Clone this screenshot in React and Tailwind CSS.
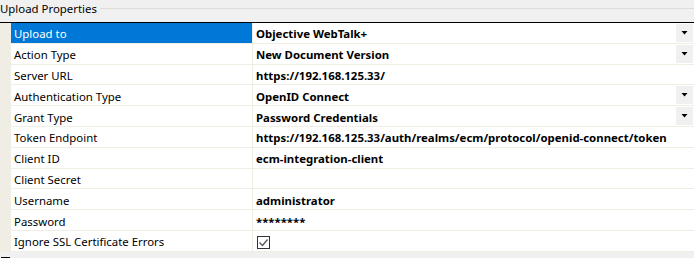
import React from "react";

const rows = [
  { label: "Upload to", value: "Objective WebTalk+", dd: true, sel: true },
  { label: "Action Type", value: "New Document Version", dd: true },
  { label: "Server URL", value: "https://192.168.125.33/" },
  { label: "Authentication Type", value: "OpenID Connect", dd: true },
  { label: "Grant Type", value: "Password Credentials", dd: true },
  { label: "Token Endpoint", value: "https://192.168.125.33/auth/realms/ecm/protocol/openid-connect/token" },
  { label: "Client ID", value: "ecm-integration-client" },
  { label: "Client Secret", value: "" },
  { label: "Username", value: "administrator" },
  { label: "Password", value: "********" },
  { label: "Ignore SSL Certificate Errors", check: true },
];

function Arrow() {
  return (
    <div className="w-[17px] h-[18px] bg-[#f0f0f0] flex items-center justify-center mr-[1px]">
      <svg width="7" height="4" viewBox="0 0 7 4">
        <polygon points="0.5,0 6.5,0 3.5,3.5" fill="#000" />
      </svg>
    </div>
  );
}

export default function App() {
  return (
    <div
      className="w-[694px] h-[258px] bg-[#f0f0f0] overflow-hidden text-[11.4px] text-black"
      style={{ fontFamily: '"Noto Sans", "Open Sans", sans-serif' }}
    >
      <div className="h-[22px] flex items-start">
        <span className="leading-[16px] pt-[1px]">Upload Properties</span>
        <div className="flex-1 border-t border-[#dcdcdc] mt-[8px] ml-[3px]" />
      </div>
      <div className="border-t border-black" />
      <div className="flex bg-[#f0ede4]">
        <div className="w-[11px]" />
        <div className="flex-1 flex flex-col">
          {rows.map((r) => (
            <div key={r.label} className="flex h-[20.8px] border-b border-[#f0ede4] bg-white">
              <div
                className={
                  "w-[242px] pl-[3px] pt-[2px] flex items-center border-r border-[#f0ede4] " +
                  (r.sel ? "bg-[#0078d7] text-white" : "")
                }
              >
                {r.label}
              </div>
              <div className="flex-1 flex items-center pl-[3px] font-bold">
                {r.check ? (
                  <div className="w-[13px] h-[13px] border border-[#333] flex items-center justify-center ml-[1px] mt-[3px]">
                    <svg width="11" height="9" viewBox="0 0 11 9">
                      <polyline points="1.5,4.5 4.5,7.5 9.5,1.5" fill="none" stroke="#555" strokeWidth="1.3" />
                    </svg>
                  </div>
                ) : (
                  <span className="flex-1 pt-[2px]">{r.value}</span>
                )}
                {r.dd && <Arrow />}
              </div>
            </div>
          ))}
        </div>
      </div>
      <div className="flex items-start mt-[5px]">
        <div className="w-[9px] h-[9px] border border-black bg-white ml-[1px]" />
        <span className="ml-[4px] leading-[12px]">Scan Parameters</span>
      </div>
    </div>
  );
}
